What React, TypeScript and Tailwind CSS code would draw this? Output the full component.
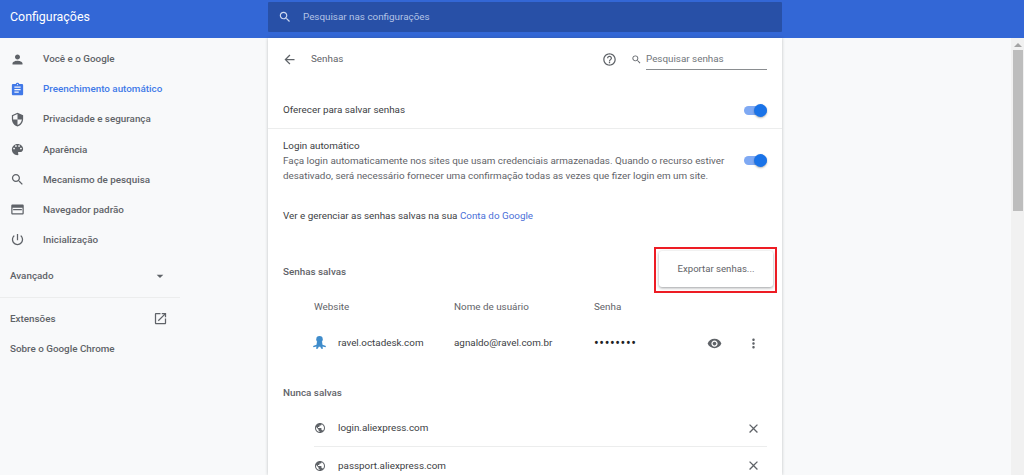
import type { ReactNode } from "react";

const paths: Record<string, string> = {
  person: "M12 12c2.21 0 4-1.79 4-4s-1.79-4-4-4-4 1.79-4 4 1.79 4 4 4zm0 2c-2.67 0-8 1.34-8 4v2h16v-2c0-2.66-5.33-4-8-4z",
  assignment: "M19 3h-4.18C14.4 1.84 13.3 1 12 1c-1.3 0-2.4.84-2.82 2H5c-1.1 0-2 .9-2 2v14c0 1.1.9 2 2 2h14c1.1 0 2-.9 2-2V5c0-1.1-.9-2-2-2zm-7 0c.55 0 1 .45 1 1s-.45 1-1 1-1-.45-1-1 .45-1 1-1zm2 14H7v-2h7v2zm3-4H7v-2h10v2zm0-4H7V7h10v2z",
  security: "M12 1L3 5v6c0 5.55 3.84 10.74 9 12 5.16-1.26 9-6.45 9-12V5l-9-4zm0 10.99h7c-.53 4.12-3.28 7.79-7 8.94V12H5V6.3l7-3.11v8.8z",
  palette: "M12 3c-4.97 0-9 4.03-9 9s4.03 9 9 9c.83 0 1.5-.67 1.5-1.5 0-.39-.15-.74-.39-1.01-.23-.26-.38-.61-.38-.99 0-.83.67-1.5 1.5-1.5H16c2.76 0 5-2.24 5-5 0-4.42-4.03-8-9-8zm-5.5 9c-.83 0-1.5-.67-1.5-1.5S5.67 9 6.5 9 8 9.67 8 10.5 7.33 12 6.5 12zm3-4C8.67 8 8 7.33 8 6.5S8.67 5 9.5 5s1.5.67 1.5 1.5S10.33 8 9.5 8zm5 0c-.83 0-1.5-.67-1.5-1.5S13.67 5 14.5 5s1.5.67 1.5 1.5S15.33 8 14.5 8zm3 4c-.83 0-1.5-.67-1.5-1.5S16.67 9 17.5 9s1.5.67 1.5 1.5-.67 1.5-1.5 1.5z",
  search: "M15.5 14h-.79l-.28-.27C15.41 12.59 16 11.11 16 9.5 16 5.91 13.09 3 9.5 3S3 5.91 3 9.5 5.91 16 9.5 16c1.61 0 3.09-.59 4.23-1.57l.27.28v.79l5 4.99L20.49 19l-4.99-5zm-6 0C7.01 14 5 11.99 5 9.5S7.01 5 9.5 5 14 7.01 14 9.5 11.99 14 9.5 14z",
  browser: "M20 4H4c-1.1 0-2 .9-2 2v12c0 1.1.9 2 2 2h16c1.1 0 2-.9 2-2V6c0-1.1-.9-2-2-2zm0 14H4V9h16v9zM5 11h14v2H5z",
  power: "M13 3h-2v10h2V3zm4.83 2.17l-1.42 1.42C17.99 7.86 19 9.81 19 12c0 3.87-3.13 7-7 7s-7-3.13-7-7c0-2.19 1.01-4.14 2.58-5.42L6.17 5.17C4.23 6.82 3 9.26 3 12c0 4.97 4.03 9 9 9s9-4.03 9-9c0-2.74-1.23-5.18-3.17-6.83z",
  open: "M19 19H5V5h7V3H5c-1.11 0-2 .9-2 2v14c0 1.1.89 2 2 2h14c1.1 0 2-.9 2-2v-7h-2v7zM14 3v2h3.59l-9.83 9.83 1.41 1.41L19 6.41V10h2V3h-7z",
  back: "M20 11H7.83l5.59-5.59L12 4l-8 8 8 8 1.41-1.41L7.83 13H20v-2z",
  help: "M11 18h2v-2h-2v2zm1-16C6.48 2 2 6.48 2 12s4.48 10 10 10 10-4.48 10-10S17.52 2 12 2zm0 18c-4.41 0-8-3.59-8-8s3.59-8 8-8 8 3.59 8 8-3.59 8-8 8zm0-14c-2.21 0-4 1.79-4 4h2c0-1.1.9-2 2-2s2 .9 2 2c0 2-3 1.75-3 5h2c0-2.25 3-2.5 3-5 0-2.21-1.79-4-4-4z",
  eye: "M12 4.5C7 4.5 2.73 7.61 1 12c1.73 4.39 6 7.5 11 7.5s9.27-3.11 11-7.5c-1.73-4.39-6-7.5-11-7.5zM12 17c-2.76 0-5-2.24-5-5s2.24-5 5-5 5 2.24 5 5-2.24 5-5 5zm0-8c-1.66 0-3 1.34-3 3s1.34 3 3 3 3-1.34 3-3-1.34-3-3-3z",
  more: "M12 8c1.1 0 2-.9 2-2s-.9-2-2-2-2 .9-2 2 .9 2 2 2zm0 2c-1.1 0-2 .9-2 2s.9 2 2 2 2-.9 2-2-.9-2-2-2zm0 6c-1.1 0-2 .9-2 2s.9 2 2 2 2-.9 2-2-.9-2-2-2z",
  close: "M19 6.41L17.59 5 12 10.59 6.41 5 5 6.41 10.59 12 5 17.59 6.41 19 12 13.41 17.59 19 19 17.59 13.41 12z",
  globe: "M12 2C6.48 2 2 6.48 2 12s4.48 10 10 10 10-4.48 10-10S17.52 2 12 2zm-1 17.93c-3.95-.49-7-3.85-7-7.93 0-.62.08-1.21.21-1.79L9 15v1c0 1.1.9 2 2 2v1.93zm6.9-2.54c-.26-.81-1-1.39-1.9-1.39h-1v-3c0-.55-.45-1-1-1H8v-2h2c.55 0 1-.45 1-1V7h2c1.1 0 2-.9 2-2v-.41c2.93 1.19 5 4.06 5 7.41 0 2.08-.8 3.97-2.1 5.39z",
  caret: "M7 10l5 5 5-5z",
};

const Icon = ({ name, className }: { name: string; className: string }) => (
  <svg viewBox="0 0 24 24" fill="currentColor" className={className}>
    <path d={paths[name]} />
  </svg>
);

const Toggle = () => (
  <div className="relative h-[9px] w-[23px] shrink-0 rounded-full bg-[#7fa9f3]">
    <div className="absolute right-0 top-[-2px] h-[13px] w-[13px] rounded-full bg-[#1a73e8] shadow-[0_1px_2px_rgba(0,0,0,0.3)]" />
  </div>
);

const menu = [
  { name: "Você e o Google", icon: "person" },
  { name: "Preenchimento automático", icon: "assignment", active: true },
  { name: "Privacidade e segurança", icon: "security" },
  { name: "Aparência", icon: "palette" },
  { name: "Mecanismo de pesquisa", icon: "search" },
  { name: "Navegador padrão", icon: "browser" },
  { name: "Inicialização", icon: "power" },
];

const SideLink = ({ children }: { children: ReactNode }) => (
  <div className="flex h-[30px] w-[180px] items-center justify-between pl-[10px] pr-[12px]">{children}</div>
);

const Sidebar = () => (
  <aside className="w-[268px] shrink-0 pt-[6px] text-[9.85px] font-medium text-[#5f6368]">
    {menu.map((item) => (
      <div
        key={item.name}
        className={`flex h-[30.15px] items-center ${item.active ? "text-[#4179e8]" : ""}`}
      >
        <div className="flex w-[43px] justify-center pr-[9px]">
          <Icon name={item.icon} className="h-[15px] w-[15px]" />
        </div>
        <span className="pt-px">{item.name}</span>
      </div>
    ))}
    <div className="mt-[6px]">
      <SideLink>
        <span className="pt-px">Avançado</span>
        <Icon name="caret" className="h-[16px] w-[16px]" />
      </SideLink>
    </div>
    <div className="mt-[6px] h-px w-[180px] bg-[#eceded]" />
    <div className="mt-[6px]">
      <SideLink>
        <span className="pt-px">Extensões</span>
        <Icon name="open" className="h-[15px] w-[15px]" />
      </SideLink>
      <SideLink>
        <span className="pt-px">Sobre o Google Chrome</span>
      </SideLink>
    </div>
  </aside>
);

const neverSaved = ["login.aliexpress.com", "passport.aliexpress.com"];

const Card = () => (
  <main className="h-full w-[514px] shrink-0 overflow-hidden bg-white text-[9.85px] text-[#3c4043] shadow-[0_0_3px_rgba(60,64,67,0.3)]">
    {/* title row */}
    <div className="flex h-[42px] items-center pl-[14px] pr-[15px]">
      <Icon name="back" className="h-[15px] w-[15px] text-[#5f6368]" />
      <span className="ml-[14px] pt-px text-[#5f6368]">Senhas</span>
      <Icon name="help" className="ml-auto h-[15px] w-[15px] text-[#5f6368]" />
      <Icon name="search" className="ml-[14px] h-[11px] w-[11px] text-[#5f6368]" />
      <div className="ml-[4px] flex h-[21px] w-[121px] items-center border-b border-[#8a8d90] pt-px text-[#70757a]">
        Pesquisar senhas
      </div>
    </div>

    <div className="mt-[12px] flex h-[37px] items-center justify-between border-b border-[#eceded] px-[15px]">
      <span className="pt-px">Oferecer para salvar senhas</span>
      <Toggle />
    </div>

    <div className="flex h-[62px] items-center justify-between px-[15px]">
      <div className="pt-px leading-[15px]">
        <div>Login automático</div>
        <div className="text-[#5f6368]">
          Faça login automaticamente nos sites que usam credenciais armazenadas. Quando o recurso estiver
          <br />
          desativado, será necessário fornecer uma confirmação todas as vezes que fizer login em um site.
        </div>
      </div>
      <Toggle />
    </div>

    <div className="flex h-[50px] items-center pl-[15px] pt-px">
      <span>
        Ver e gerenciar as senhas salvas na sua <span className="text-[#4a6fd8]">Conta do Google</span>
      </span>
    </div>

    <div className="mt-[6px] flex h-[46px] items-start justify-between pl-[15px] pr-[5px]">
      <div className="flex h-[50px] items-center pt-px font-medium text-[#5f6368]">Senhas salvas</div>
      {/* highlight box from the screenshot */}
      <div className="h-[46px] w-[123px] border-2 border-[#ed1c24] pb-[4px] pl-[3px] pr-[2px] pt-[2px]">
        <div className="flex h-full items-center justify-center rounded-[3px] bg-white pt-px text-[9.6px] text-[#5f6368] shadow-[0_1px_3px_rgba(60,64,67,0.5)]">
          Exportar senhas...
        </div>
      </div>
    </div>

    <div className="flex h-[28px] items-center pl-[46px] pt-px text-[#5f6368]">
      <span className="w-[140px]">Website</span>
      <span className="w-[140px]">Nome de usuário</span>
      <span>Senha</span>
    </div>

    <div className="flex h-[44px] items-center pl-[44px]">
      <div className="flex w-[142px] items-center">
        <svg viewBox="0 0 12 12" className="mr-[11px] h-[15px] w-[15px] text-[#3f8ccb]" fill="currentColor">
          <circle cx="6" cy="3.4" r="2.6" />
          <path d="M4 5.2h4l.4 2.6 2.8.9-.4 1-2.4-.5.4 1.8H7.4L6.6 9.4H5.4l-.8 1.6H3.2l.4-1.8-2.4.5-.4-1 2.8-.9z" />
        </svg>
        <span className="pt-px">ravel.octadesk.com</span>
      </div>
      <span className="w-[140px] pt-px">agnaldo@ravel.com.br</span>
      <span className="w-[113px] text-[14px] tracking-[0.6px] text-[#202124]">••••••••</span>
      <Icon name="eye" className="h-[15px] w-[15px] text-[#5f6368]" />
      <Icon name="more" className="ml-[24px] h-[15px] w-[15px] text-[#5f6368]" />
    </div>

    <div className="mt-[11px] flex h-[34px] items-center pl-[15px] pt-px font-medium text-[#5f6368]">Nunca salvas</div>

    <div className="ml-[46px] mr-[15px]">
      {neverSaved.map((site, i) => (
        <div
          key={site}
          className={`flex h-[37px] items-center ${i === 0 ? "border-b border-[#eceded]" : ""}`}
        >
          <Icon name="globe" className="h-[12px] w-[12px] text-[#5f6368]" />
          <span className="ml-[12px] pt-px">{site}</span>
          <Icon name="close" className="ml-auto mr-[6px] h-[15px] w-[15px] text-[#5f6368]" />
        </div>
      ))}
    </div>
  </main>
);

const Scrollbar = () => (
  <div className="flex w-[13px] shrink-0 flex-col items-center bg-[#f1f1f1]">
    <svg viewBox="0 0 8 4" className="mt-[5px] h-[4px] w-[8px] fill-[#a3a3a3]">
      <path d="M4 0l4 4H0z" />
    </svg>
    <div className="mt-[3px] h-[161px] w-[10px] bg-[#bdbdbd]" />
  </div>
);

export default function App() {
  return (
    <div className="flex h-screen flex-col overflow-hidden bg-[#f8f9fa] font-['Roboto',sans-serif]">
      <header className="flex h-[38px] shrink-0 bg-[#3367d6] text-white">
        <div className="flex h-[35px] w-[268px] items-center pl-[10px] text-[12.4px]">Configurações</div>
        <div className="mt-[2px] flex h-[30px] w-[514px] items-center rounded-[1px] bg-[#2850a7] pl-[10px] text-[9.85px] text-[#b4c4e6]">
          <Icon name="search" className="h-[14px] w-[14px] text-[#cdd8f0]" />
          <span className="ml-[11px]">Pesquisar nas configurações</span>
        </div>
      </header>
      <div className="flex min-h-0 flex-1">
        <Sidebar />
        <Card />
        <div className="flex-1" />
        <Scrollbar />
      </div>
    </div>
  );
}
